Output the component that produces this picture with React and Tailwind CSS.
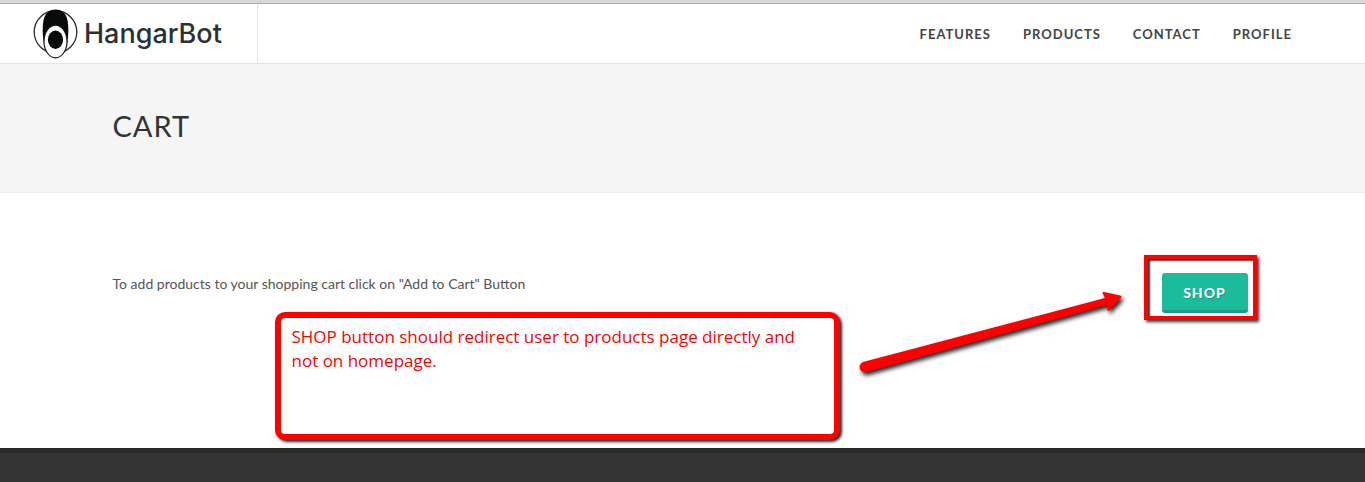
const links = ["Features", "Products", "Contact", "Profile"];

function Logo() {
  return (
    <a href="#home" className="flex items-center gap-1.5 border-r border-[#e5e5e5] pl-8 pr-[35px] text-[#2b3031]">
      <svg className="h-[52px] w-[46px] shrink-0" viewBox="0 0 46 52" fill="none" aria-hidden="true">
        <circle cx="23.5" cy="24" r="21.3" fill="#fff" stroke="#2b2e2e" strokeWidth="1.3" />
        <path
          d="M12 36C10.300 27 10.300 17 11.800 11C13.500 4.500 18 1.500 23.500 1.500S33.500 4.500 35.200 11C36.700 17 36.700 27 35 36Z"
          fill="#080b0a"
        />
        <ellipse cx="23.5" cy="33.5" rx="11.500" ry="16.300" fill="#fff" stroke="#151818" strokeWidth="1.2" />
        <ellipse cx="23.5" cy="31.800" rx="7.600" ry="9.200" fill="#080b0a" />
      </svg>
      <span className="font-['Inter',sans-serif] text-[27px] leading-8 font-medium">HangarBot</span>
    </a>
  );
}

function Header() {
  return (
    <header className="flex h-[60px] justify-between border-b border-[#e3e3e3] bg-white">
      <Logo />
      <nav className="flex items-center gap-8 pr-[73px] pt-0.5">
        {links.map((label) => (
          <a
            key={label}
            href={"#" + label.toLowerCase()}
            className="font-['Lato',sans-serif] text-[13px] font-bold tracking-[1px] text-[#444] uppercase"
          >
            {label}
          </a>
        ))}
      </nav>
    </header>
  );
}

function Note() {
  return (
    <div className="absolute top-[119px] left-[162px] h-[128px] w-[565px] rounded-[10px] border-[6px] border-[#f00] bg-white px-[11px] py-[7px] font-['Open_Sans',sans-serif] text-[17px] leading-6 text-[#f00] shadow-[2px_2px_3px_0px_rgba(0,0,0,0.85)]">
      SHOP button should redirect user to products page directly and not on homepage.
    </div>
  );
}

function Arrow() {
  return (
    <svg
      className="absolute top-[87px] left-[737px] h-[100px] w-[290px] drop-shadow-[2px_3px_2px_rgba(0,0,0,0.85)]"
      viewBox="0 0 290 100"
      fill="#f00"
      aria-hidden="true"
    >
      <path d="M13 82L255 18L252.500 13Q252 11.500 254 12L270 15.500Q272 16 271 18L259 30.500Q257.500 32 257.500 29.500L257 25L17 92A5.200 5.200 0 0 1 13 82Z" />
    </svg>
  );
}

export default function App() {
  return (
    <div className="min-h-screen overflow-x-hidden bg-white">
      <div className="h-1 border-b border-[#aaa] bg-[#d8d8d8]" />
      <Header />
      <section className="border-b border-[#eee] bg-[#f5f5f5] px-6 pt-[46px] pb-[50px]">
        <h1 className="mx-auto max-w-[1140px] font-['Lato',sans-serif] text-[29px] leading-8 tracking-[1px] text-[#333] uppercase">
          Cart
        </h1>
      </section>
      <main className="px-6">
        <div className="relative mx-auto flex h-[255px] max-w-[1140px] items-start justify-between pt-20 pr-[5px]">
          <p className="font-['Lato',sans-serif] text-sm leading-[22px] text-[#555]">
            To add products to your shopping cart click on "Add to Cart" Button
          </p>
          <Note />
          <Arrow />
          <div className="relative">
            <button
              type="button"
              className="h-10 w-[86px] rounded-[3px] border-b-[3px] border-[#16a085] bg-[#1abc9c] pt-0.5 font-['Lato',sans-serif] text-sm font-black tracking-[1px] text-white uppercase [text-shadow:1px_1px_1px_rgba(0,0,0,0.2)]"
            >
              Shop
            </button>
            <div className="pointer-events-none absolute -top-[18px] -right-[9px] -bottom-[7px] -left-[18px] border-4 border-[#f00] shadow-[2px_2px_3px_0px_rgba(0,0,0,0.8),inset_2px_2px_2px_rgba(0,0,0,0.8)]" />
          </div>
        </div>
      </main>
      <footer className="h-[34px] border-t-[5px] border-[#292929] bg-[#333]" />
    </div>
  );
}
